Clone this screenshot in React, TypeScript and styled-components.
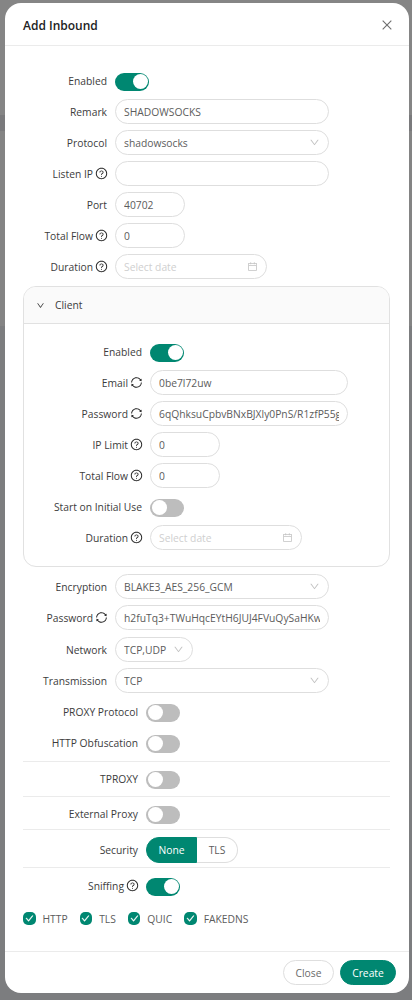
import React from 'react';
import styled, { createGlobalStyle } from 'styled-components';
import {
  AiOutlineCalendar,
  AiOutlineCheck,
  AiOutlineClose,
  AiOutlineDown,
  AiOutlineQuestionCircle,
  AiOutlineSync,
} from 'react-icons/ai';

const GREEN = '#008771';

const GlobalStyle = createGlobalStyle`
  html, body {
    margin: 0;
    padding: 0;
    height: 1000px;
    overflow: hidden;
    background: linear-gradient(
      to bottom,
      #858585 0,
      #858585 115px,
      #7a7a7c 115px,
      #7a7a7c 131px,
      #848484 131px,
      #848484 326px,
      #7c7d7f 326px
    );
  }
  * {
    box-sizing: border-box;
  }
`;

const Modal = styled.div`
  display: flex;
  flex-direction: column;
  width: 404px;
  height: 990px;
  margin: 3px 0 0 5px;
  background: #fff;
  border-radius: 16px;
  font-family: 'Open Sans', sans-serif;
  font-size: 10.3px;
  color: #3c3c3c;
`;

const Header = styled.div`
  display: flex;
  align-items: center;
  justify-content: space-between;
  height: 43px;
  padding: 2px 15px 0 18px;
  border-bottom: 1px solid #ebebeb;
`;

const Title = styled.div`
  font-size: 12px;
  font-weight: 600;
  color: #222;
`;

const CloseButton = styled.span`
  display: flex;
  font-size: 14px;
  color: #6f6f6f;
`;

const Body = styled.div`
  flex: 1;
  padding: 19px 19px 0 18px;
`;

const Row = styled.div<{ $label: number; $top?: number }>`
  display: grid;
  grid-template-columns: ${(p) => p.$label}px 1fr;
  align-items: center;
  height: 31px;
  margin-top: ${(p) => p.$top ?? 0}px;
`;

const Label = styled.label`
  display: flex;
  align-items: center;
  justify-content: flex-end;
  gap: 2px;
  padding-right: 8px;
  white-space: nowrap;
`;

const Hint = styled.span`
  display: flex;
  margin-right: -1px;
  font-size: 13px;
  color: #222;
`;

const Field = styled.div<{ $width: number }>`
  display: flex;
  align-items: center;
  justify-content: space-between;
  width: ${(p) => p.$width}px;
  height: 25px;
  padding: 0 8px;
  border: 1px solid #dedede;
  border-radius: 13px;
  color: #5c5c5c;
  background: #fff;
`;

const TextInput = styled.input`
  flex: 1;
  min-width: 0;
  width: 100%;
  padding: 0;
  border: 0;
  outline: 0;
  font: inherit;
  color: inherit;
  background: transparent;
  &::placeholder {
    color: #cfcfcf;
  }
`;

const FieldIcon = styled.span`
  display: flex;
  flex: none;
  margin-left: 5px;
  font-size: 11px;
  color: #c2c2c2;
`;

const Switch = styled.span<{ $on?: boolean }>`
  display: flex;
  justify-content: ${(p) => (p.$on ? 'flex-end' : 'flex-start')};
  align-items: center;
  width: 34px;
  height: 18px;
  margin-top: 2px;
  padding: 1.5px;
  border-radius: 9px;
  background: ${(p) => (p.$on ? GREEN : '#bdbdbd')};
`;

const Knob = styled.span`
  width: 15px;
  height: 15px;
  border-radius: 50%;
  background: #fff;
`;

const Collapse = styled.div`
  margin: 4px 0 4px;
  border: 1px solid #e1e1e1;
  border-radius: 13px;
  overflow: hidden;
`;

const CollapseHeader = styled.div`
  display: flex;
  align-items: center;
  gap: 10px;
  height: 37px;
  padding: 0 12px;
  background: #fafafa;
  border-bottom: 1px solid #e1e1e1;
`;

const CollapseArrow = styled.span`
  display: flex;
  font-size: 9px;
  color: #333;
`;

const CollapseBody = styled.div`
  height: 242px;
  padding: 12px 0 0;
`;

const Divider = styled.div<{ $top: number; $bottom: number }>`
  height: 1px;
  margin: ${(p) => p.$top}px 0 ${(p) => p.$bottom}px;
  background: #ebebeb;
`;

const Segment = styled.div`
  display: flex;
  height: 26px;
`;

const SegmentItem = styled.span<{ $on?: boolean }>`
  display: flex;
  align-items: center;
  justify-content: center;
  width: ${(p) => (p.$on ? 51 : 41)}px;
  border: 1px solid ${(p) => (p.$on ? GREEN : '#dedede')};
  border-left-width: ${(p) => (p.$on ? 1 : 0)}px;
  border-radius: ${(p) => (p.$on ? '13px 0 0 13px' : '0 13px 13px 0')};
  color: ${(p) => (p.$on ? '#fff' : '#5c5c5c')};
  background: ${(p) => (p.$on ? GREEN : '#fff')};
`;

const Checks = styled.div`
  display: flex;
  align-items: center;
  gap: 12px;
  height: 31px;
  margin-top: 2px;
`;

const Check = styled.span`
  display: flex;
  align-items: center;
  gap: 7px;
  color: #5c5c5c;
`;

const CheckBox = styled.span`
  display: flex;
  align-items: center;
  justify-content: center;
  width: 12.5px;
  height: 12.5px;
  border-radius: 5px;
  font-size: 9px;
  color: #fff;
  background: ${GREEN};
  svg {
    stroke: currentColor;
    stroke-width: 50;
  }
`;

const Footer = styled.div`
  display: flex;
  justify-content: flex-end;
  gap: 6px;
  height: 42px;
  padding: 8px 13px 0 0;
  border-top: 1px solid #ebebeb;
`;

const Button = styled.button<{ $primary?: boolean }>`
  height: 25px;
  padding: 0;
  width: ${(p) => (p.$primary ? 56 : 51)}px;
  border: 1px solid ${(p) => (p.$primary ? GREEN : '#dedede')};
  border-radius: 13px;
  font: inherit;
  color: ${(p) => (p.$primary ? '#fff' : '#6a6a6a')};
  background: ${(p) => (p.$primary ? GREEN : '#fff')};
`;

const Toggle = ({ on }: { on?: boolean }) => (
  <Switch $on={on}>
    <Knob />
  </Switch>
);

type InputProps = {
  width: number;
  value?: string;
  placeholder?: string;
  icon?: React.ReactNode;
};

const Input = ({ width, value, placeholder, icon }: InputProps) => (
  <Field $width={width}>
    <TextInput readOnly value={value ?? ''} placeholder={placeholder} />
    {icon && <FieldIcon>{icon}</FieldIcon>}
  </Field>
);

type LineProps = {
  label: string;
  width: number;
  top?: number;
  mark?: 'help' | 'sync';
  children: React.ReactNode;
};

const Line = ({ label, width, top, mark, children }: LineProps) => (
  <Row $label={width} $top={top}>
    <Label>
      {label}
      {mark === 'help' && (
        <Hint>
          <AiOutlineQuestionCircle />
        </Hint>
      )}
      {mark === 'sync' && (
        <Hint>
          <AiOutlineSync />
        </Hint>
      )}
    </Label>
    {children}
  </Row>
);

const MAIN = 92;
const INNER = 126;
const TOGGLES = 123;

const SNIFF = ['HTTP', 'TLS', 'QUIC', 'FAKEDNS'];

export default function App() {
  return (
    <>
      <GlobalStyle />
      <Modal>
        <Header>
          <Title>Add Inbound</Title>
          <CloseButton>
            <AiOutlineClose />
          </CloseButton>
        </Header>
        <Body>
          <Line label="Enabled" width={MAIN}>
            <Toggle on />
          </Line>
          <Line label="Remark" width={MAIN}>
            <Input width={214} value="SHADOWSOCKS" />
          </Line>
          <Line label="Protocol" width={MAIN}>
            <Input width={214} value="shadowsocks" icon={<AiOutlineDown />} />
          </Line>
          <Line label="Listen IP" width={MAIN} mark="help">
            <Input width={214} />
          </Line>
          <Line label="Port" width={MAIN}>
            <Input width={70} value="40702" />
          </Line>
          <Line label="Total Flow" width={MAIN} mark="help">
            <Input width={70} value="0" />
          </Line>
          <Line label="Duration" width={MAIN} mark="help">
            <Input width={152} placeholder="Select date" icon={<AiOutlineCalendar />} />
          </Line>
          <Collapse>
            <CollapseHeader>
              <CollapseArrow>
                <AiOutlineDown />
              </CollapseArrow>
              Client
            </CollapseHeader>
            <CollapseBody>
              <Line label="Enabled" width={INNER}>
                <Toggle on />
              </Line>
              <Line label="Email" width={INNER} mark="sync">
                <Input width={198} value="0be7l72uw" />
              </Line>
              <Line label="Password" width={INNER} mark="sync">
                <Input width={198} value="6qQhksuCpbvBNxBJXly0PnS/R1zfP55gKx2mWe" />
              </Line>
              <Line label="IP Limit" width={INNER} mark="help">
                <Input width={70} value="0" />
              </Line>
              <Line label="Total Flow" width={INNER} mark="help">
                <Input width={70} value="0" />
              </Line>
              <Line label="Start on Initial Use" width={INNER}>
                <Toggle />
              </Line>
              <Line label="Duration" width={INNER} mark="help">
                <Input width={152} placeholder="Select date" icon={<AiOutlineCalendar />} />
              </Line>
            </CollapseBody>
          </Collapse>
          <Line label="Encryption" width={MAIN}>
            <Input width={214} value="BLAKE3_AES_256_GCM" icon={<AiOutlineDown />} />
          </Line>
          <Line label="Password" width={MAIN} mark="sync">
            <Input width={214} value="h2fuTq3+TWuHqcEYtH6JUJ4FVuQySaHKw8Lm0a" />
          </Line>
          <Line label="Network" width={MAIN} top={1}>
            <Input width={78} value="TCP,UDP" icon={<AiOutlineDown />} />
          </Line>
          <Line label="Transmission" width={MAIN}>
            <Input width={214} value="TCP" icon={<AiOutlineDown />} />
          </Line>
          <Line label="PROXY Protocol" width={TOGGLES}>
            <Toggle />
          </Line>
          <Line label="HTTP Obfuscation" width={TOGGLES}>
            <Toggle />
          </Line>
          <Divider $top={3} $bottom={1} />
          <Line label="TPROXY" width={TOGGLES}>
            <Toggle />
          </Line>
          <Divider $top={2} $bottom={1} />
          <Line label="External Proxy" width={TOGGLES}>
            <Toggle />
          </Line>
          <Divider $top={0} $bottom={4} />
          <Line label="Security" width={TOGGLES}>
            <Segment>
              <SegmentItem $on>None</SegmentItem>
              <SegmentItem>TLS</SegmentItem>
            </Segment>
          </Line>
          <Divider $top={2} $bottom={2} />
          <Line label="Sniffing" width={TOGGLES} mark="help">
            <Toggle on />
          </Line>
          <Checks>
            {SNIFF.map((name) => (
              <Check key={name}>
                <CheckBox>
                  <AiOutlineCheck />
                </CheckBox>
                {name}
              </Check>
            ))}
          </Checks>
        </Body>
        <Footer>
          <Button>Close</Button>
          <Button $primary>Create</Button>
        </Footer>
      </Modal>
    </>
  );
}
